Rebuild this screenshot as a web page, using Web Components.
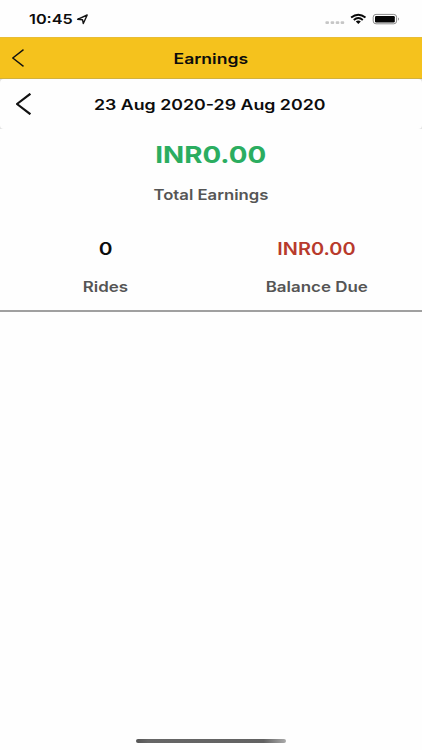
<!DOCTYPE html>
<html lang="en"><head><meta charset="utf-8"><title>Earnings</title>
<style>
html,body{margin:0;height:100%;background:#fefefe;overflow:hidden}
body{font-family:Inter,"Liberation Sans",sans-serif;color:#0c0c0c}
</style></head><body>
<earnings-screen></earnings-screen>
<script>
class WideText extends HTMLElement{
  constructor(){super();this.attachShadow({mode:'open'}).innerHTML=`<style>
  :host{display:flex;justify-content:center;white-space:nowrap;line-height:20px}
  span{display:block;flex:none;transform-origin:50% 50%}</style><span><slot></slot></span>`}
  connectedCallback(){
    const s=this.shadowRoot.querySelector('span'),w=+this.getAttribute('width');
    this.style.width=w+'px';
    s.style.transform=`scaleX(${w/s.offsetWidth})`;
  }
}
class StatusBar extends HTMLElement{
  constructor(){super();this.attachShadow({mode:'open'}).innerHTML=`<style>
  :host{display:flex;height:37px;box-sizing:border-box;padding:9px 22px 0 29px;justify-content:space-between}
  div{display:flex;height:20px;align-items:center}
  wide-text{font-size:13.3px;font-weight:600}
  svg{display:block}</style>
  <div><wide-text width="44">10:45</wide-text>
  <svg width="14" height="14" viewBox="0 0 14 14" style="margin-left:3px"><path d="M1.6 7.3L11.2 3L7.3 11.5L6.5 7.7Z" fill="none" stroke="#151515" stroke-width="1.4" stroke-linejoin="round"/></svg></div>
  <div><svg width="76" height="20" viewBox="0 0 76 20">
  <g fill="#c6c6c6"><rect x="1.4" y="12.2" width="3.6" height="2.8" rx="1"/><rect x="6.6" y="12.2" width="3.6" height="2.8" rx="1"/><rect x="11.7" y="12.2" width="3.6" height="2.8" rx="1"/><rect x="16.6" y="12.2" width="3.6" height="2.8" rx="1"/></g>
  <g fill="none" stroke="#080808" stroke-width="1.9"><path d="M27.1 8.5Q34.3 2.8 41.5 8.5"/><path d="M29.8 11Q34.3 7.2 38.8 11"/></g>
  <path d="M31.8 12.5Q34.3 10.6 36.8 12.5L34.3 15Z" fill="#080808"/>
  <rect x="49.2" y="5.4" width="23.4" height="9.4" rx="2.8" fill="#fff" stroke="#8b8b8b"/><rect x="51" y="7" width="19.8" height="6.4" rx="1.2" fill="#050505"/><path d="M74 8.6Q76 10.1 74 11.7Z" fill="#8b8b8b"/></svg></div>`}
}
class BackChevron extends HTMLElement{
  constructor(){super();this.attachShadow({mode:'open'}).innerHTML=`<style>:host{display:block}svg{display:block;width:100%;height:100%}</style>
  <svg viewBox="0 0 12 18" preserveAspectRatio="none"><path d="M11.5 .6L.8 9L11.5 17.4" fill="none" stroke="#111" vector-effect="non-scaling-stroke"/></svg>`;}
  connectedCallback(){this.shadowRoot.querySelector('path').setAttribute('stroke-width',this.getAttribute('weight'))}
}
class TitleBar extends HTMLElement{
  constructor(){super();this.attachShadow({mode:'open'}).innerHTML=`<style>
  :host{display:grid;grid-template-columns:1fr auto 1fr;height:42px;background:#f5c21d;align-items:center;box-shadow:inset 0 1px #e8bd35,inset 0 -1px #d1b13e;font-size:14.5px;font-weight:600}
  back-chevron{width:12px;height:18px;margin-left:12.3px}
  wide-text{padding-top:1px}</style>
  <back-chevron weight="1.35"></back-chevron><wide-text width="75"><slot></slot></wide-text><i></i>`}
}
class DateCard extends HTMLElement{
  constructor(){super();this.attachShadow({mode:'open'}).innerHTML=`<style>
  :host{display:block;background:linear-gradient(#dedede,#e4e4e4);height:50px}
  section{display:grid;grid-template-columns:1fr auto 1fr;height:50px;background:#fefefe;border-radius:4px;align-items:center;font-size:14.7px;font-weight:600;box-sizing:border-box;padding-right:2px}
  back-chevron{width:15px;height:22px;margin-left:16.2px}
  wide-text{padding-top:1px}</style>
  <section><back-chevron weight="2.2"></back-chevron><wide-text width="231"><slot></slot></wide-text><i></i></section>`}
}
class StatValue extends HTMLElement{
  constructor(){super();this.attachShadow({mode:'open'}).innerHTML=`<style>
  :host{display:flex;flex-direction:column;align-items:center;gap:18px;font-weight:600}
  ::slotted([slot=value]){font-size:17px}
  ::slotted([slot=label]){font-size:14.5px;color:#555}
  :host([large]){gap:20px}
  :host([large]) ::slotted([slot=value]){font-size:23.4px;font-weight:700}</style>
  <slot name="value"></slot><slot name="label"></slot>`}
}
class EarningsScreen extends HTMLElement{
  constructor(){super();this.attachShadow({mode:'open'}).innerHTML=`<style>
  :host{display:flex;flex-direction:column;height:750px;width:422px}
  .total{padding-top:16px}
  .row{display:grid;grid-template-columns:1fr 1fr;padding-top:34px;height:71px;border-bottom:2px solid #a0a0a0}
  footer{margin-top:auto;height:11px;display:flex;justify-content:center}
  footer i{width:150px;height:4px;border-radius:2px;background:linear-gradient(90deg,#555 0%,#666 8%,#626262 85%,#aaa 100%)}
  </style>
  <status-bar></status-bar><title-bar>Earnings</title-bar><date-card>23 Aug 2020-29 Aug 2020</date-card>
  <stat-value class="total" large><wide-text slot="value" width="111.5" style="color:#2bad60">INR0.00</wide-text><wide-text slot="label" width="115">Total Earnings</wide-text></stat-value>
  <div class="row"><stat-value><wide-text slot="value" width="13.5">0</wide-text><wide-text slot="label" width="45.5">Rides</wide-text></stat-value>
  <stat-value><wide-text slot="value" width="78.5" style="color:#b83a2c">INR0.00</wide-text><wide-text slot="label" width="101.5">Balance Due</wide-text></stat-value></div>
  <footer><i></i></footer>`}
}
customElements.define('wide-text',WideText);
customElements.define('back-chevron',BackChevron);
customElements.define('status-bar',StatusBar);
customElements.define('title-bar',TitleBar);
customElements.define('date-card',DateCard);
customElements.define('stat-value',StatValue);
customElements.define('earnings-screen',EarningsScreen);
// Widths are measured again once every element has its final font size.
function fit(root){root.querySelectorAll('*').forEach(e=>{if(e.localName==='wide-text')e.connectedCallback();if(e.shadowRoot)fit(e.shadowRoot)})}
fit(document);
</script></body></html>
